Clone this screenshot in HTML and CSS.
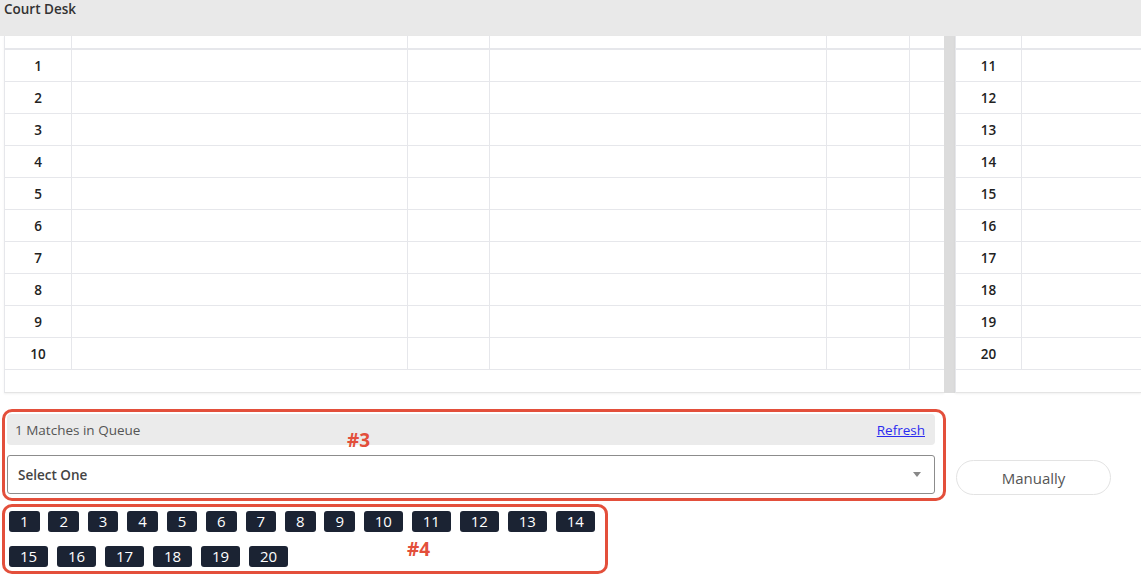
FILE: index.html
```html
<!DOCTYPE html>
<html lang="en">
<head>
    <meta charset="UTF-8">
    <meta name="viewport" content="width=device-width, initial-scale=1.0">
    <title>Court Desk</title>
    <link rel="stylesheet" href="styles.css">
</head>
<body>
    <div class="topbar">Court Desk</div>

    <div class="board">
        <table class="courts courts-main">
            <colgroup>
                <col style="width: 68px">
                <col style="width: 336px">
                <col style="width: 82px">
                <col style="width: 337px">
                <col style="width: 83px">
                <col>
            </colgroup>
            <thead>
                <tr><th></th><th></th><th></th><th></th><th></th><th></th></tr>
            </thead>
            <tbody>
                <tr><td class="num">1</td><td></td><td></td><td></td><td></td><td></td></tr>
                <tr><td class="num">2</td><td></td><td></td><td></td><td></td><td></td></tr>
                <tr><td class="num">3</td><td></td><td></td><td></td><td></td><td></td></tr>
                <tr><td class="num">4</td><td></td><td></td><td></td><td></td><td></td></tr>
                <tr><td class="num">5</td><td></td><td></td><td></td><td></td><td></td></tr>
                <tr><td class="num">6</td><td></td><td></td><td></td><td></td><td></td></tr>
                <tr><td class="num">7</td><td></td><td></td><td></td><td></td><td></td></tr>
                <tr><td class="num">8</td><td></td><td></td><td></td><td></td><td></td></tr>
                <tr><td class="num">9</td><td></td><td></td><td></td><td></td><td></td></tr>
                <tr><td class="num">10</td><td></td><td></td><td></td><td></td><td></td></tr>
            </tbody>
            <tfoot>
                <tr><td colspan="6"></td></tr>
            </tfoot>
        </table>

        <div class="divider"></div>

        <table class="courts courts-side">
            <colgroup>
                <col style="width: 67px">
                <col>
            </colgroup>
            <thead>
                <tr><th></th><th></th></tr>
            </thead>
            <tbody>
                <tr><td class="num">11</td><td></td></tr>
                <tr><td class="num">12</td><td></td></tr>
                <tr><td class="num">13</td><td></td></tr>
                <tr><td class="num">14</td><td></td></tr>
                <tr><td class="num">15</td><td></td></tr>
                <tr><td class="num">16</td><td></td></tr>
                <tr><td class="num">17</td><td></td></tr>
                <tr><td class="num">18</td><td></td></tr>
                <tr><td class="num">19</td><td></td></tr>
                <tr><td class="num">20</td><td></td></tr>
            </tbody>
            <tfoot>
                <tr><td colspan="2"></td></tr>
            </tfoot>
        </table>
    </div>

    <div class="queue-row">
        <div class="queue marked">
            <span class="mark mark-queue">#3</span>
            <div class="queue-head">
                <span>1 Matches in Queue</span>
                <a href="#" class="refresh">Refresh</a>
            </div>
            <div class="picker">
                <span>Select One</span>
                <span class="caret"></span>
            </div>
        </div>
        <button class="manual">Manually</button>
    </div>

    <div class="court-tags marked">
        <span class="mark mark-tags">#4</span>
        <span class="tag">1</span>
        <span class="tag">2</span>
        <span class="tag">3</span>
        <span class="tag">4</span>
        <span class="tag">5</span>
        <span class="tag">6</span>
        <span class="tag">7</span>
        <span class="tag">8</span>
        <span class="tag">9</span>
        <span class="tag">10</span>
        <span class="tag">11</span>
        <span class="tag">12</span>
        <span class="tag">13</span>
        <span class="tag">14</span>
        <span class="tag">15</span>
        <span class="tag">16</span>
        <span class="tag">17</span>
        <span class="tag">18</span>
        <span class="tag">19</span>
        <span class="tag">20</span>
    </div>
</body>
</html>
```

FILE: styles.css
```css
body {
    margin: 0;
    font-family: "Open Sans", "Noto Sans", sans-serif;
    font-size: 13.5px;
    color: #333;
    background: #fff;
    overflow: hidden;
}
.topbar {
    height: 36px;
    padding: 0 4px;
    line-height: 18px;
    background: #e9e9e9;
    font-weight: 600;
    color: #333;
}

/* court board */
.board {
    display: flex;
    padding-left: 4px;
}
.courts {
    border-collapse: separate;
    border-spacing: 0;
    table-layout: fixed;
    box-shadow: 0 1px 2px rgba(0, 0, 0, 0.06);
}
.courts-main {
    width: 940px;
}
.courts-side {
    flex: 1;
}
.courts th,
.courts td {
    padding: 0;
    border-right: 1px solid #e6e7eb;
}
.courts th:first-child,
.courts td:first-child {
    border-left: 1px solid #e6e7eb;
}
.courts th:last-child,
.courts td:last-child {
    border-right: none;
}
.courts th {
    height: 12px;
    line-height: 12px;
    border-bottom: 2px solid #e6e7eb;
}
.courts tbody td {
    padding-top: 1px;
    line-height: 30px;
    border-bottom: 1px solid #e6e7eb;
}
.courts td.num {
    text-align: center;
    font-weight: 600;
    color: #222;
}
.courts tfoot td {
    height: 22px;
    border-bottom: 1px solid #e4e4e4;
}
.divider {
    width: 11px;
    background: #dcdcdc;
}

/* annotation frames */
.marked {
    position: relative;
    border: 3px solid #e34f3b;
    border-radius: 10px;
}
.mark {
    position: absolute;
    font-size: 19px;
    font-weight: 700;
    line-height: 1;
    color: #e34f3b;
}
.mark-queue {
    left: 342px;
    top: 19px;
}
.mark-tags {
    left: 402px;
    top: 33px;
}

/* match queue */
.queue-row {
    display: flex;
    margin-top: 16px;
    padding-left: 2px;
}
.queue {
    width: 928px;
    padding: 2px 8px 4px 2px;
}
.queue-head {
    display: flex;
    justify-content: space-between;
    align-items: center;
    height: 31px;
    padding: 0 10px 0 8px;
    background: #ebebeb;
    border-radius: 4px;
    color: #555;
}
.refresh {
    color: #2b2bf0;
    text-decoration: underline;
}
.picker {
    display: flex;
    justify-content: space-between;
    align-items: center;
    height: 37px;
    margin-top: 10px;
    padding: 0 13px 0 10px;
    border: 1px solid #8c8c8c;
    border-radius: 3px;
    font-weight: 600;
    color: #444;
}
.caret {
    width: 0;
    height: 0;
    border-left: 4px solid transparent;
    border-right: 4px solid transparent;
    border-top: 5px solid #888;
}
.manual {
    align-self: flex-end;
    width: 155px;
    height: 35px;
    margin: 0 0 6px 10px;
    background: #fff;
    border: 1px solid #e3e3e3;
    border-radius: 18px;
    font-family: inherit;
    font-size: 15px;
    color: #555;
}

/* court number tags */
.court-tags {
    display: flex;
    flex-wrap: wrap;
    gap: 14px 8.85px;
    width: 594px;
    margin: 3px 0 0 2px;
    padding: 4px 2px 4px 4px;
}
.tag {
    height: 21px;
    padding: 0 11px;
    line-height: 21px;
    background: #1b2333;
    border-radius: 3px;
    font-size: 15px;
    color: #fff;
}
```
